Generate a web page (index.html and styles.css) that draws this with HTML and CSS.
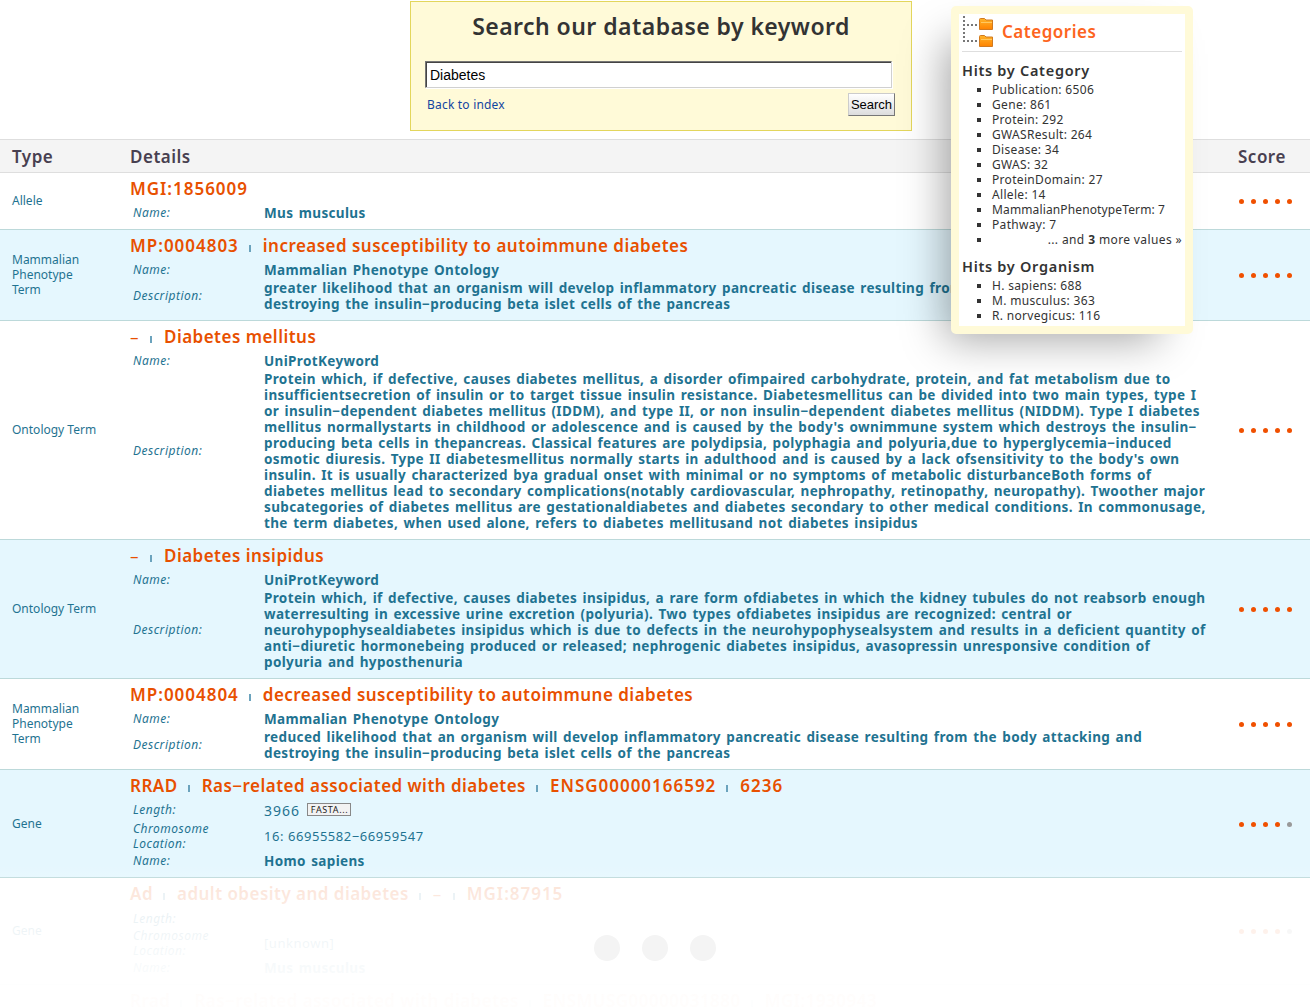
FILE: index.html
```html
<!DOCTYPE html>
<html lang="en">
<head>
<meta charset="utf-8">
<title>Search results</title>
<link rel="stylesheet" href="styles.css">
</head>
<body>
<div class="page">
  <form class="search">
    <h1>Search our database by keyword</h1>
    <input class="keyword" type="text" value="Diabetes">
    <div class="actions"><a class="back">Back to index</a><button class="go" type="button">Search</button></div>
  </form>

  <section class="results">
    <div class="row head"><span>Type</span><span>Details</span><span class="score-head">Score</span></div>

    <div class="row">
      <div class="type">Allele</div>
      <div class="details">
        <h2><span class="id">MGI:1856009</span></h2>
        <div class="field"><i>Name:</i><b>Mus musculus</b></div>
      </div>
      <div class="score"><u></u><u></u><u></u><u></u><u></u></div>
    </div>

    <div class="row alt">
      <div class="type">Mammalian<br>Phenotype<br>Term</div>
      <div class="details">
        <h2><span class="id">MP:0004803</span><span>increased susceptibility to autoimmune diabetes</span></h2>
        <div class="field"><i>Name:</i><b>Mammalian Phenotype Ontology</b></div>
        <div class="field desc"><i>Description:</i><b>greater likelihood that an organism will develop inflammatory pancreatic disease resulting from the body attacking and<br>destroying the insulin−producing beta islet cells of the pancreas</b></div>
      </div>
      <div class="score"><u></u><u></u><u></u><u></u><u></u></div>
    </div>

    <div class="row">
      <div class="type">Ontology Term</div>
      <div class="details">
        <h2><span class="dash">–</span><span>Diabetes mellitus</span></h2>
        <div class="field"><i>Name:</i><b>UniProtKeyword</b></div>
        <div class="field desc"><i>Description:</i><b>Protein which, if defective, causes diabetes mellitus, a disorder ofimpaired carbohydrate, protein, and fat metabolism due to<br>insufficientsecretion of insulin or to target tissue insulin resistance. Diabetesmellitus can be divided into two main types, type I<br>or insulin−dependent diabetes mellitus (IDDM), and type II, or non insulin−dependent diabetes mellitus (NIDDM). Type I diabetes<br>mellitus normallystarts in childhood or adolescence and is caused by the body's ownimmune system which destroys the insulin−<br>producing beta cells in thepancreas. Classical features are polydipsia, polyphagia and polyuria,due to hyperglycemia−induced<br>osmotic diuresis. Type II diabetesmellitus normally starts in adulthood and is caused by a lack ofsensitivity to the body's own<br>insulin. It is usually characterized bya gradual onset with minimal or no symptoms of metabolic disturbanceBoth forms of<br>diabetes mellitus lead to secondary complications(notably cardiovascular, nephropathy, retinopathy, neuropathy). Twoother major<br>subcategories of diabetes mellitus are gestationaldiabetes and diabetes secondary to other medical conditions. In commonusage,<br>the term diabetes, when used alone, refers to diabetes mellitusand not diabetes insipidus</b></div>
      </div>
      <div class="score"><u></u><u></u><u></u><u></u><u></u></div>
    </div>

    <div class="row alt">
      <div class="type">Ontology Term</div>
      <div class="details">
        <h2><span class="dash">–</span><span>Diabetes insipidus</span></h2>
        <div class="field"><i>Name:</i><b>UniProtKeyword</b></div>
        <div class="field desc"><i>Description:</i><b>Protein which, if defective, causes diabetes insipidus, a rare form ofdiabetes in which the kidney tubules do not reabsorb enough<br>waterresulting in excessive urine excretion (polyuria). Two types ofdiabetes insipidus are recognized: central or<br>neurohypophysealdiabetes insipidus which is due to defects in the neurohypophysealsystem and results in a deficient quantity of<br>anti−diuretic hormonebeing produced or released; nephrogenic diabetes insipidus, avasopressin unresponsive condition of<br>polyuria and hyposthenuria</b></div>
      </div>
      <div class="score"><u></u><u></u><u></u><u></u><u></u></div>
    </div>

    <div class="row">
      <div class="type">Mammalian<br>Phenotype<br>Term</div>
      <div class="details">
        <h2><span class="id">MP:0004804</span><span>decreased susceptibility to autoimmune diabetes</span></h2>
        <div class="field"><i>Name:</i><b>Mammalian Phenotype Ontology</b></div>
        <div class="field desc"><i>Description:</i><b>reduced likelihood that an organism will develop inflammatory pancreatic disease resulting from the body attacking and<br>destroying the insulin−producing beta islet cells of the pancreas</b></div>
      </div>
      <div class="score"><u></u><u></u><u></u><u></u><u></u></div>
    </div>

    <div class="row alt gene">
      <div class="type">Gene</div>
      <div class="details">
        <h2><span>RRAD</span><span>Ras−related associated with diabetes</span><span class="id">ENSG00000166592</span><span class="id">6236</span></h2>
        <div class="field"><i>Length:</i><div class="length">3966 <span class="fasta">FASTA...</span></div></div>
        <div class="field loc"><i>Chromosome<br>Location:</i><div>16: 66955582−66959547</div></div>
        <div class="field"><i>Name:</i><b>Homo sapiens</b></div>
      </div>
      <div class="score"><u></u><u></u><u></u><u></u><u class="off"></u></div>
    </div>

    <div class="row">
      <div class="type">Gene</div>
      <div class="details">
        <h2><span>Ad</span><span>adult obesity and diabetes</span><span class="dash">–</span><span class="id">MGI:87915</span></h2>
        <div class="field short"><i>Length:</i></div>
        <div class="field loc"><i>Chromosome<br>Location:</i><div>[unknown]</div></div>
        <div class="field"><i>Name:</i><b>Mus musculus</b></div>
      </div>
      <div class="score"><u></u><u></u><u></u><u></u><u class="off"></u></div>
    </div>

    <div class="row last">
      <div></div>
      <div class="details">
        <h2><span>Rrad</span><span>Ras−related associated with diabetes</span><span>ENSMUSG00000031880</span><span>MGI:1930943</span></h2>
      </div>
    </div>
  </section>

  <div class="fade"></div>
  <div class="more"><span></span><span></span><span></span></div>

  <aside class="categories">
    <header>
      <svg width="32" height="32" viewBox="0 0 32 32">
        <defs><linearGradient id="folder" x1="0" y1="0" x2="0" y2="1"><stop offset="0" stop-color="#ffb52a"/><stop offset="1" stop-color="#ff8200"/></linearGradient></defs>
        <path d="M1 1v28M4 10h12M4 26h12" fill="none" stroke="#777" stroke-width="2" stroke-dasharray="2 2"/>
        <g fill="url(#folder)" stroke="#d07a20"><path d="M16.500 4.500q0-1 1-1h4l1.500 1.500h6.500v9.500h-13z"/><path d="M16.500 21.500q0-1 1-1h4l1.500 1.500h6.500v9.500h-13z"/></g>
        <path d="M18 7.500h11M18 24.500h11" stroke="#ffc860"/>
      </svg>
      <span>Categories</span>
    </header>
    <h3>Hits by Category</h3>
    <ul>
      <li>Publication: 6506</li><li>Gene: 861</li><li>Protein: 292</li><li>GWASResult: 264</li><li>Disease: 34</li><li>GWAS: 32</li><li>ProteinDomain: 27</li><li>Allele: 14</li><li class="long">MammalianPhenotypeTerm: 7</li><li>Pathway: 7</li><li class="rest">... and <b>3</b> more values »</li>
    </ul>
    <h3>Hits by Organism</h3>
    <ul><li>H. sapiens: 688</li><li>M. musculus: 363</li><li>R. norvegicus: 116</li></ul>
  </aside>
</div>
</body>
</html>
```
FILE: styles.css
```css
* { box-sizing: border-box; }
body { margin: 0; background: #fff; font-family: "Noto Sans", "Open Sans", sans-serif; font-size: 12px; color: #333; }
h1, h2, h3, ul { margin: 0; padding: 0; }
.page { position: relative; width: 1310px; height: 1007px; padding-top: 1px; overflow: hidden; white-space: nowrap; }

.search { width: 502px; height: 130px; margin-left: 410px; padding: 8px 15px 0 14px; background: #fffad8; border: 1px solid #e3d65c; }
.search h1 { padding-left: 1px; font-size: 23px; font-weight: 600; line-height: 32px; letter-spacing: .45px; text-align: center; }
.keyword { display: block; width: 467px; height: 27px; margin-top: 19px; padding: 0 4px; border: 1px solid; border-color: #767676 #d0d0d0 #d0d0d0 #767676; box-shadow: inset 1px 1px #444, 1px 1px #fff; background: #fff; color: #000; font: 14px "Liberation Sans", Arial, sans-serif; }
.actions { display: flex; justify-content: space-between; align-items: center; height: 23px; margin-top: 5px; padding: 0 1px 0 2px; }
.back { color: #1245a0; letter-spacing: .2px; }
.go { width: 47px; height: 23px; padding: 0; border: 1px solid; border-color: #ccc #777 #777 #ccc; background: linear-gradient(#fff, #ddd); color: #000; font: 13px "Liberation Sans", Arial, sans-serif; }

.results { margin-top: 8px; color: #1f7391; }
.row { display: grid; grid-template-columns: 130px 1108px 1fr; border-bottom: 1px solid #bcd9da; }
.row.alt { background: #e5f7fe; }
.row.head { height: 34px; align-items: center; border-top: 1px solid #dedede; border-bottom-color: #dedede; background: #f4f4f4; color: #484050; font-size: 17px; font-weight: 600; letter-spacing: .5px; }
.head span:first-child, .type { padding-left: 12px; }
.type { align-self: center; padding-bottom: 2px; line-height: 15px; }
.details { padding: 4px 0 6px; }
h2 { display: flex; height: 24px; margin-bottom: 3px; line-height: 24px; font-size: 17px; font-weight: 600; color: #e85000; letter-spacing: .47px; }
h2 .id { letter-spacing: .98px; }
h2 .dash { padding: 0 1px 0 0; font-weight: 400; }
h2 span + span::before { content: ""; display: inline-block; width: 2px; height: 7px; margin: 0 12px 0 10px; vertical-align: 0; background: #6ba3bd; }
.field { display: grid; grid-template-columns: 131px 1fr; height: 19px; padding: 0 0 2px 3px; align-items: center; line-height: 15px; font-size: 13px; letter-spacing: .55px; }
.field i { font-size: 12px; letter-spacing: .5px; }
.field b { line-height: 16px; font-size: 13.5px; font-weight: 700; letter-spacing: .36px; word-spacing: 1.5px; }
.field.desc { height: auto; }
.field.desc i { padding-bottom: 2px; }
.field.short { height: 18px; padding-bottom: 0; }
.field.loc { height: 32px; padding-bottom: 0; }
.length { display: flex; align-items: center; gap: 7px; font-size: 14px; letter-spacing: 1px; padding-top: 1px; }
.fasta { width: 44px; height: 13px; margin-top: -1px; padding-left: 1px; border: 1px solid #888; background: #f2f2f2; color: #222; font-size: 9px; line-height: 11px; letter-spacing: .6px; text-align: center; }
.score { display: flex; align-self: center; gap: 7px; padding-left: 1px; }
.score u { width: 5px; height: 5px; border-radius: 50%; background: #f05000; }
.score .off { background: #999; }
.gene .type { padding-bottom: 0; }
.gene .score { padding-top: 2px; }
.row.last { border: 0; }

.fade { position: absolute; left: 0; right: 0; top: 865px; bottom: 0; background: linear-gradient(rgba(255,255,255,0), rgba(255,255,255,.12) 13px, rgba(255,255,255,.84) 13px, rgba(255,255,255,.91) 55px, rgba(255,255,255,.965) 103px, rgba(255,255,255,.99) 132px); }
.more { position: absolute; left: 594px; top: 935px; display: flex; gap: 22px; }
.more span { width: 26px; height: 26px; border-radius: 50%; background: #f4f4f4; }

.categories { position: absolute; left: 951px; top: 6px; width: 242px; height: 328px; padding: 0 3px; border: 8px solid #fffad8; border-radius: 5px; background: #fff; box-shadow: -20px 20px 40px -14px rgba(0,0,0,.35); }
.categories header { display: flex; height: 38px; padding-top: 1px; border-bottom: 1px solid #dedede; font-size: 17px; font-weight: 600; letter-spacing: .5px; color: #fd6420; }
.categories svg { margin-left: 1px; }
.categories header span { margin-left: 7px; line-height: 33px; }
h3 { height: 21px; font-size: 14.5px; line-height: 19px; font-weight: 600; letter-spacing: .7px; }
.categories header + h3 { margin-top: 9px; }
.categories ul { list-style: none; margin-bottom: 10px; }
.categories li { display: flex; align-items: center; height: 15px; line-height: 15px; letter-spacing: .32px; white-space: pre; }
.categories li::before { content: ""; width: 4px; height: 4px; margin: 0 11px 0 15px; background: #333; }
.categories .long { letter-spacing: .13px; }
.categories .rest { letter-spacing: .38px; }
.categories .rest::before { margin-right: auto; }
```
